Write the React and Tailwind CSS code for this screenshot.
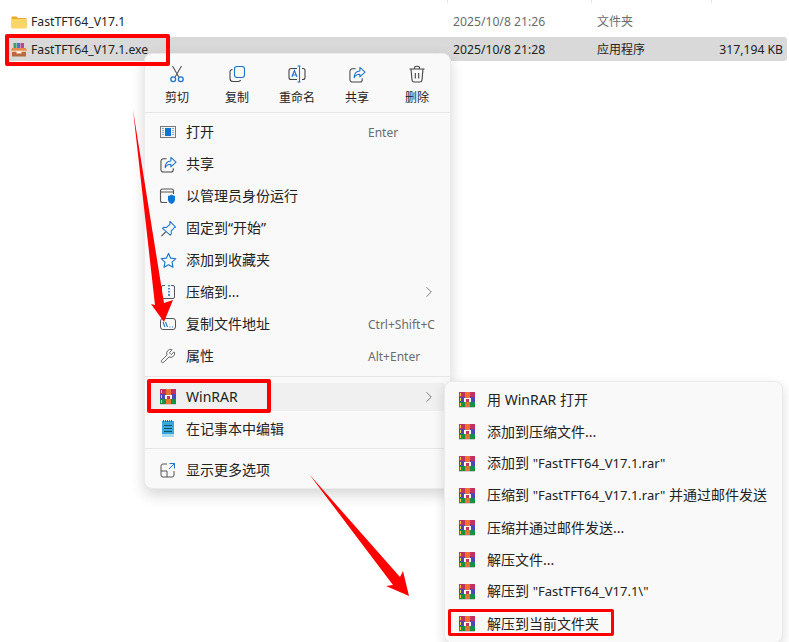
import { Wrench, ChevronRight } from 'lucide-react';

const Folder = () => (
  <svg width="16" height="16" viewBox="0 0 16 16">
    <path d="M0.5 3.5a1 1 0 0 1 1-1h4l1.5 1.5h7.5a1 1 0 0 1 1 1v8a1 1 0 0 1-1 1h-13a1 1 0 0 1-1-1z" fill="#e8a92c" />
    <path d="M0.5 6a1 1 0 0 1 1-1h13a1 1 0 0 1 1 1v7.5a1 1 0 0 1-1 1h-13a1 1 0 0 1-1-1z" fill="#fbd566" />
  </svg>
);

const ExeBox = () => (
  <svg width="16" height="16" viewBox="0 0 16 16">
    <rect x="2.5" y="1" width="3" height="5" fill="#4a9d5b" />
    <rect x="6" y="1" width="3" height="5" fill="#4f74c9" />
    <rect x="9.5" y="1" width="3.5" height="5" fill="#b94a8f" />
    <path d="M1 6h14l1 2.5H0z" fill="#e98a4a" />
    <rect x="1" y="8.5" width="14" height="6" fill="#b96a3c" />
    <rect x="1" y="8.5" width="14" height="1.5" fill="#f3c9a0" />
    <rect x="5.5" y="9" width="5" height="2.5" fill="#fff1dc" />
  </svg>
);

const WinRar = () => (
  <svg width="16" height="16" viewBox="0 0 16 16" shapeRendering="crispEdges">
    <rect x="0" y="0" width="16" height="5" fill="#c4305f" />
    <rect x="0" y="5" width="16" height="5" fill="#5048b8" />
    <rect x="0" y="10" width="16" height="5" fill="#159044" />
    <rect x="0" y="15" width="16" height="1" fill="#cfcfcf" />
    <rect x="1" y="1" width="1" height="3" fill="#f5d142" />
    <rect x="1" y="6" width="1" height="3" fill="#f5d142" />
    <rect x="1" y="11" width="1" height="3" fill="#f5d142" />
    <rect x="6" y="0" width="5" height="15" fill="#e8752c" />
    <path d="M5 6h7v4h-2V7H7v3H5z" fill="#ffffff" />
    <rect x="7" y="7" width="3" height="3" fill="#c4305f" />
  </svg>
);

const IconScissors = () => (
  <svg width="18" height="18" viewBox="0 0 18 18" fill="none" strokeWidth="1.100">
    <path d="M4.500 1l6.300 11M13.500 1L7.200 12" stroke="#555" />
    <circle cx="5.200" cy="14.300" r="2.400" stroke="#1a73c9" strokeWidth="1.300" />
    <circle cx="12.800" cy="14.300" r="2.400" stroke="#1a73c9" strokeWidth="1.300" />
  </svg>
);

const IconCopy = () => (
  <svg width="18" height="18" viewBox="0 0 18 18" fill="none" strokeWidth="1.1">
    <rect x="6.5" y="1.5" width="10" height="11" rx="2.5" stroke="#1a73c9" />
    <path d="M4.500 4.500A2.500 2.500 0 0 0 2 7v6.500A3 3 0 0 0 5 16.500h5.500a2.500 2.500 0 0 0 2.200-1.500" stroke="#444" />
  </svg>
);

const IconRename = () => (
  <svg width="18" height="18" viewBox="0 0 18 18" fill="none" strokeWidth="1.1">
    <path d="M9 3.500H3a2 2 0 0 0-2 2v7a2 2 0 0 0 2 2h6M14 3.500h1a2 2 0 0 1 2 2v7a2 2 0 0 1-2 2h-1" stroke="#444" />
    <path d="M3.800 12l2.600-6.500L9 12M4.800 10h3.200" stroke="#1a73c9" />
    <path d="M9.500 1h3M9.500 17h3M11.500 1v16" stroke="#1a73c9" />
  </svg>
);

const IconShare = () => (
  <svg width="17" height="17" viewBox="0 0 18 18" fill="none" strokeWidth="1.1">
    <path d="M7 3H3.500A2.500 2.500 0 0 0 1 5.500v9A2.500 2.500 0 0 0 3.500 17h8a2.500 2.500 0 0 0 2.500-2.500V13" stroke="#444" />
    <path d="M11.500 1.500L17 6.500l-5.500 5V8.700C8.500 8.700 6.500 10 5.500 12.500c0-4.500 2.500-7 6-7.200z" stroke="#1a73c9" strokeLinejoin="round" />
  </svg>
);

const IconTrash = () => (
  <svg width="18" height="18" viewBox="0 0 18 18" fill="none" stroke="#444" strokeWidth="1.1">
    <path d="M1.500 4h15M6.500 4V3a1.800 1.800 0 0 1 1.800-1.800h1.400A1.800 1.800 0 0 1 11.500 3v1M3 4l1 11a2.200 2.200 0 0 0 2.200 2h5.600a2.200 2.200 0 0 0 2.200-2l1-11M7.300 8v5.500M10.700 8v5.500" />
  </svg>
);

const IconOpen = () => (
  <svg width="16" height="16" viewBox="0 0 16 16" shapeRendering="crispEdges">
    <rect x="0.5" y="2.5" width="15" height="11" fill="#f4f4f4" stroke="#777" />
    <rect x="5" y="4" width="6" height="8" fill="#0f74d1" />
    <path d="M2 4h2v1H2zM2 6h2v1H2zM2 8h2v1H2zM2 10h2v1H2zM12 4h2v1h-2zM12 6h2v1h-2zM12 8h2v1h-2zM12 10h2v1h-2z" fill="#89a9c9" />
  </svg>
);

const IconAdmin = () => (
  <svg width="18" height="18" viewBox="0 0 18 18" fill="none">
    <path d="M8 15.500H3.500A2 2 0 0 1 1.500 13.500V4a2 2 0 0 1 2-2h9a2 2 0 0 1 2 2v3M1.500 5h13" stroke="#555" strokeWidth="1.1" />
    <path d="M12.500 7.500c1 .9 2.200 1.300 3.500 1.300v3.700c0 2.200-1.400 3.700-3.500 4.500-2.100-.8-3.500-2.300-3.500-4.500V8.800c1.300 0 2.500-.4 3.500-1.300z" fill="#0f74d1" />
  </svg>
);

const IconPin = () => (
  <svg width="17" height="17" viewBox="0 0 18 18" fill="none" strokeWidth="1.1" strokeLinejoin="round">
    <path d="M10.500 1.500l6 6-1.500.7-3.200 3.600.2 3-1.200 1.200L2.700 8.900l1.200-1.200 3 .2 3.600-3.200z" stroke="#1a73c9" />
    <path d="M6 12.500l-4.500 4.500" stroke="#444" />
  </svg>
);

const IconStar = () => (
  <svg width="17" height="17" viewBox="0 0 18 18" fill="none" stroke="#1a73c9" strokeWidth="1.200" strokeLinejoin="round">
    <path d="M9 1.500l2.300 5 5.400.6-4 3.700 1.100 5.400L9 13.500l-4.800 2.700 1.100-5.400-4-3.700 5.400-.6z" />
  </svg>
);

const IconZip = () => (
  <svg width="16" height="16" viewBox="0 0 16 16" fill="none">
    <path d="M5 1.500H3A1.500 1.500 0 0 0 1.500 3v10A1.500 1.500 0 0 0 3 14.500h10a1.500 1.500 0 0 0 1.500-1.500V3A1.500 1.500 0 0 0 13 1.500h-2" stroke="#555" />
    <path d="M9 1v1.500M9 4v1.500M9 7v1.500M9 10v2" stroke="#1a73c9" strokeWidth="1.600" />
  </svg>
);

const IconPath = () => (
  <svg width="16" height="16" viewBox="0 0 16 16" fill="none">
    <rect x="0.500" y="2.500" width="15" height="11" rx="2.500" stroke="#555" />
    <path d="M3 6l2 5M5.500 6l2 5M9.500 11h.9M12 11h.9" stroke="#1a73c9" strokeWidth="1.100" />
  </svg>
);

const IconNotepad = () => (
  <svg width="14" height="18" viewBox="0 0 14 18" shapeRendering="crispEdges">
    <rect x="1" y="1" width="12" height="16" fill="#3ba7d8" />
    <rect x="1" y="14" width="12" height="3" fill="#a9dcef" />
    <path d="M2 0h1v2H2zM4 0h1v2H4zM6 0h1v2H6zM8 0h1v2H8zM10 0h1v2h-1z" fill="#1c6c96" />
    <path d="M3 5h8v1H3zM3 8h8v1H3zM3 11h8v1H3z" fill="#12506f" />
  </svg>
);

const IconMore = () => (
  <svg width="16" height="16" viewBox="0 0 16 16" fill="none">
    <path d="M7 2H3a2 2 0 0 0-2 2v9a2 2 0 0 0 2 2h9a2 2 0 0 0 2-2V9" stroke="#555" />
    <path d="M1 9h6v6" stroke="#555" />
    <path d="M9.500 1.500h5v5M14.500 1.500L9 7" stroke="#1a73c9" />
  </svg>
);

const mainItems = [
  { icon: <IconOpen />, label: '打开', hint: 'Enter' },
  { icon: <IconShare />, label: '共享' },
  { icon: <IconAdmin />, label: '以管理员身份运行' },
  { icon: <IconPin />, label: '固定到“开始”' },
  { icon: <IconStar />, label: '添加到收藏夹' },
  { icon: <IconZip />, label: '压缩到...', arrow: true },
  { icon: <IconPath />, label: '复制文件地址', hint: 'Ctrl+Shift+C' },
  { icon: <Wrench size={16} strokeWidth={1.200} color="#444" />, label: '属性', hint: 'Alt+Enter' },
];

const FileName = ({ children }) => <span className="text-[13px]">{children}</span>;

const subItems = [
  { id: 'open', text: '用 WinRAR 打开' },
  { id: 'add', text: '添加到压缩文件...' },
  { id: 'addrar', text: <>添加到 <FileName>"FastTFT64_V17.1.rar"</FileName></> },
  { id: 'mail', text: <>压缩到 <FileName>"FastTFT64_V17.1.rar"</FileName> 并通过邮件发送</> },
  { id: 'mail2', text: '压缩并通过邮件发送...' },
  { id: 'extract', text: '解压文件...' },
  { id: 'extractto', text: <>解压到 <FileName>"FastTFT64_V17.1\"</FileName></> },
  { id: 'here', text: '解压到当前文件夹' },
];

const toolbar = [
  { icon: <IconScissors />, label: '剪切' },
  { icon: <IconCopy />, label: '复制' },
  { icon: <IconRename />, label: '重命名' },
  { icon: <IconShare />, label: '共享' },
  { icon: <IconTrash />, label: '删除' },
];

const MenuRow = ({ icon, label, hint, arrow }) => (
  <div className="h-8 flex items-center pl-[14px] pr-[15px] text-[14px] text-[#222]">
    <span className="w-[18px] flex justify-center shrink-0">{icon}</span>
    <span className="ml-[9px] -mt-[2px]">{label}</span>
    {hint && <span className="ml-auto mt-[2px] w-[67px] text-[12px] text-[#6b6b6b]">{hint}</span>}
    {arrow && <ChevronRight size={18} strokeWidth={1} color="#555" className="ml-auto -mr-[3px]" />}
  </div>
);

const App = () => {
  return (
    <div
      className="relative w-[789px] h-[642px] overflow-hidden bg-white"
      style={{ fontFamily: '"Noto Sans", "Noto Sans CJK SC", sans-serif' }}
    >
      {/* File list */}
      <div className="flex h-[3px] pl-[447px]">
        <div className="w-[144px] border-l border-[#e5e5e5]" />
        <div className="w-[120px] border-l border-[#e5e5e5]" />
        <div className="border-l border-[#e5e5e5]" />
      </div>
      <div className="flex items-center h-6 mt-[7px] text-[12.2px] text-[#6b6b6b]">
        <span className="ml-[11px] w-[16px] flex"><Folder /></span>
        <span className="ml-[4px] w-[422px] text-[#222]">FastTFT64_V17.1</span>
        <span className="w-[144px]">2025/10/8 21:26</span>
        <span className="text-[12px]">文件夹</span>
      </div>
      <div className="flex items-center h-6 pt-[2px] mt-[3px] ml-[5px] mr-[2px] rounded-[3px] bg-[#d9d9d9] text-[12.2px] text-[#222]">
        <span className="ml-[6px] w-[16px] flex"><ExeBox /></span>
        <span className="ml-[4px] w-[422px]">FastTFT64_V17.1.exe</span>
        <span className="w-[144px]">2025/10/8 21:28</span>
        <span className="w-[70px] text-[12px]">应用程序</span>
        <span className="ml-auto mr-[4px]">317,194 KB</span>
      </div>

      {/* Context menu */}
      <div className="absolute left-[144px] top-[53px] w-[307px] h-[436px] rounded-lg bg-[#f9f9f9] border border-[#ebebeb] shadow-[0_6px_14px_rgba(0,0,0,0.16)]">
        <div className="h-[59px] flex border-b border-[#e6e6e6] pl-[2px]">
          {toolbar.map((t) => (
            <div key={t.label} className="w-[60px] flex flex-col items-center pt-[10px]">
              <span className="h-[20px] flex items-center">{t.icon}</span>
              <span className="mt-[4px] text-[12px] leading-[20px] text-[#222]">{t.label}</span>
            </div>
          ))}
        </div>
        <div className="pt-[3px]">
          {mainItems.map((m) => (
            <MenuRow key={m.label} {...m} />
          ))}
        </div>
        <div className="mt-[4px] h-px bg-[#e6e6e6]" />
        <div className="mt-[6px] mx-[4px] h-7 flex items-center rounded bg-[#f0f0f0] pl-[10px] pr-[11px] text-[14px] text-[#222]">
          <span className="w-[18px] flex justify-center"><WinRar /></span>
          <span className="ml-[9px] -mt-[2px]">WinRAR</span>
          <ChevronRight size={18} strokeWidth={1} color="#555" className="ml-auto -mr-[3px]" />
        </div>
        <div className="mt-[2px]">
          <MenuRow icon={<IconNotepad />} label="在记事本中编辑" />
        </div>
        <div className="mt-[3px] h-px bg-[#e6e6e6]" />
        <div className="mt-[5px]">
          <MenuRow icon={<IconMore />} label="显示更多选项" />
        </div>
      </div>

      {/* WinRAR submenu */}
      <div className="absolute left-[444px] top-[381px] w-[339px] h-[262px] rounded-lg bg-[#f9f9f9] border border-[#ebebeb] shadow-[0_4px_12px_rgba(0,0,0,0.14)] pt-[2px]">
        {subItems.map((s) => (
          <div key={s.id} className="h-8 flex items-center pl-[14px] text-[14px] text-[#222]">
            <span className="w-4 flex"><WinRar /></span>
            <span className="ml-[12px] -mt-[2px] whitespace-pre">{s.text}</span>
          </div>
        ))}
      </div>

      {/* Annotations */}
      <div className="absolute left-[5px] top-[34px] w-[165px] h-[32px] rounded-[2px] border-[4px] border-[#ff0000]" />
      <div className="absolute left-[147px] top-[379px] w-[124px] h-[34px] rounded-[2px] border-[4px] border-[#ff0000]" />
      <div className="absolute left-[448px] top-[609px] w-[166px] h-[27px] rounded-[2px] border-[3px] border-[#ff0000]" />
      <svg className="absolute left-0 top-0 pointer-events-none" width="789" height="642">
        <polygon points="133,110 155,305 151,304 164,322 173,300 164,303" fill="#ff0000" />
        <polygon points="309,474 393,585 386,586 409,596 403,571 400,577" fill="#ff0000" />
      </svg>
    </div>
  );
};

export default App;
